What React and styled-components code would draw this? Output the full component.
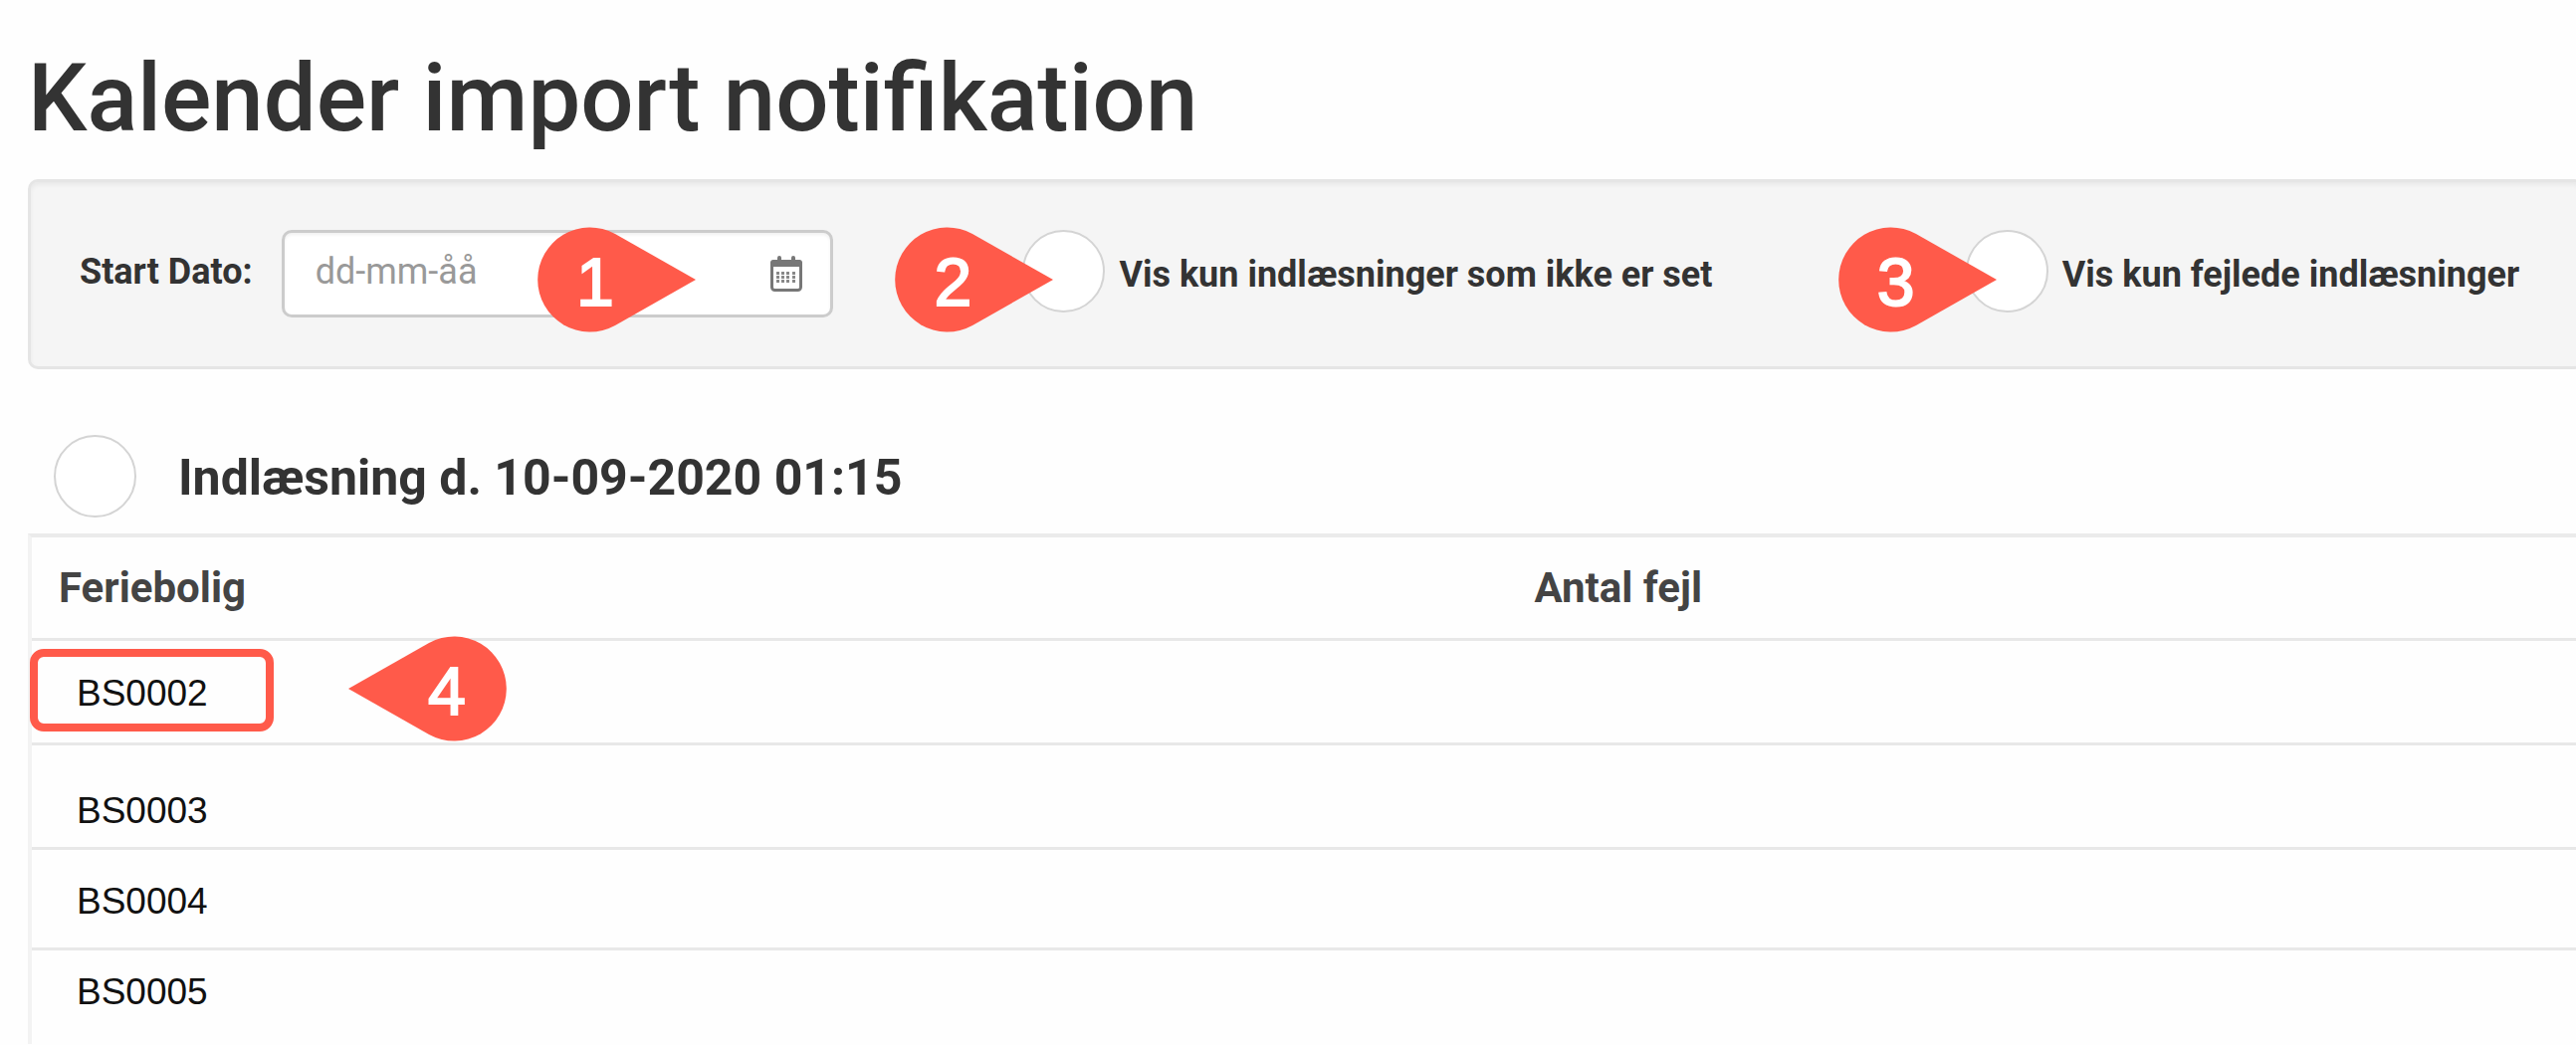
import React from "react";
import styled, { createGlobalStyle } from "styled-components";

const GlobalStyle = createGlobalStyle`
  *, *::before, *::after { box-sizing: border-box; }
  body {
    margin: 0;
    background: #fefefe;
    color: #333;
    font-family: Roboto, "Liberation Sans", sans-serif;
  }
`;

const Page = styled.main`
  padding: 41px 0 0 28px;
  overflow: hidden;
`;

const Title = styled.h1`
  margin: 0;
  font-size: 94px;
  font-weight: 500;
  line-height: 116px;
`;

const FilterPanel = styled.form`
  display: grid;
  grid-template-columns: 37.7% 37.7% 1fr;
  align-items: start;
  margin: 23px -8px 0 0;
  padding: 48px 0 49px 49px;
  border: 3px solid #e5e5e5;
  border-radius: 10px;
  background: #f5f5f5;
  box-shadow: inset 0 3px 4px rgba(0, 0, 0, 0.05);
`;

const Field = styled.div`
  position: relative;
  display: flex;
  align-items: center;
  gap: ${(p) => p.$gap}px;
`;

const FieldLabel = styled.label`
  padding-top: ${(p) => (p.$check ? 6 : 0)}px;
  padding-bottom: ${(p) => (p.$check ? 0 : 4)}px;
  font-size: 36px;
  font-weight: 700;
  line-height: 44px;
  white-space: nowrap;
`;

const DateBox = styled.div`
  display: flex;
  align-items: center;
  width: 554px;
  height: 88px;
  padding: 0 27px 0 31px;
  border: 3px solid #ccc;
  border-radius: 10px;
  background: #fff;
  box-shadow: inset 0 2px 3px rgba(0, 0, 0, 0.06);
`;

const DateInput = styled.input`
  flex: 1;
  min-width: 0;
  padding: 0 0 4px;
  border: 0;
  outline: 0;
  background: transparent;
  color: #333;
  font: 400 36px/44px Roboto, "Liberation Sans", sans-serif;
  &::placeholder { color: #999; opacity: 1; }
`;

const CalendarButton = styled.button`
  display: flex;
  padding: 0;
  border: 0;
  background: none;
  cursor: pointer;
`;

const RoundCheck = styled.input.attrs({ type: "checkbox" })`
  appearance: none;
  flex: none;
  width: 83px;
  height: 83px;
  margin: 0;
  border: 2px solid #d4d4d4;
  border-radius: 50%;
  background: #fff;
  &:checked { background: #999; }
`;

const MarkerWrap = styled.span`
  position: absolute;
  top: ${(p) => p.$top}px;
  left: ${(p) => p.$left}px;
  width: 160px;
  height: 106px;
  pointer-events: none;
`;

const MarkerShape = styled.svg`
  display: block;
  transform: ${(p) => (p.$flip ? "scaleX(-1)" : "none")};
`;

const MarkerNumber = styled.span`
  position: absolute;
  top: 0;
  left: ${(p) => (p.$flip ? 46 : 6)}px;
  width: 106px;
  color: #fff;
  font: 400 68px/110px "Liberation Sans", Arial, sans-serif;
  -webkit-text-stroke: 2px #fff;
  text-align: center;
`;

const ImportHeader = styled.div`
  display: flex;
  align-items: center;
  gap: 42px;
  padding: 66px 0 16px 26px;
`;

const ImportTitle = styled.label`
  padding-top: 2px;
  font-size: 50px;
  font-weight: 700;
  line-height: 60px;
`;

const ImportTable = styled.table`
  width: 100%;
  border-collapse: separate;
  border-spacing: 0;
  border-top: 4px solid #ebebeb;
  border-left: 4px solid #f3f3f3;
  table-layout: fixed;
`;

const HeadCell = styled.th`
  width: ${(p) => p.$width || "auto"};
  height: 104px;
  padding: 0 27px;
  border-bottom: 3px solid #e8e8e8;
  color: #444;
  font-size: 42px;
  font-weight: 700;
  line-height: 52px;
  text-align: left;
`;

const Cell = styled.td`
  position: relative;
  height: ${(p) => p.$height}px;
  padding: ${(p) => p.$top}px 28px 0 45px;
  border-bottom: ${(p) => (p.$last ? "0" : "3px solid #e8e8e8")};
  vertical-align: top;
`;

const HomeLink = styled.a`
  color: #111;
  font: 400 37px/42px "Liberation Sans", Arial, sans-serif;
  text-decoration: none;
`;

const Highlight = styled.span`
  position: absolute;
  top: 8px;
  left: -2px;
  width: 245px;
  height: 83px;
  border: 8px solid #ff5a4a;
  border-radius: 14px;
  pointer-events: none;
`;

function Marker({ number, top, left, flip }) {
  return (
    <MarkerWrap $top={top} $left={left}>
      <MarkerShape $flip={flip} width="160" height="106" viewBox="0 0 160 106" aria-hidden="true">
        <path d="M160 53 L79 7 A52.5 52.5 0 1 0 79 99 Z" fill="#ff5a4a" />
      </MarkerShape>
      <MarkerNumber $flip={flip}>{number}</MarkerNumber>
    </MarkerWrap>
  );
}

function CalendarIcon() {
  return (
    <svg width="34" height="38" viewBox="0 0 34 38" aria-hidden="true">
      <rect x="2.5" y="6.5" width="29" height="29" rx="3" fill="none" stroke="#777" strokeWidth="3" />
      <path d="M1 12V8a3 3 0 0 1 3-3h26a3 3 0 0 1 3 3v4z" fill="#777" />
      <path d="M10 3v5M24 3v5" stroke="#777" strokeWidth="4" strokeLinecap="round" />
      <g fill="#888">
        {[17, 21, 25].map((y) =>
          [7, 12, 17, 23].map((x) => <rect key={`${x}-${y}`} x={x} y={y} width="3" height="3" />)
        )}
      </g>
    </svg>
  );
}

const homes = [
  { id: "BS0002", height: 105, top: 32, marked: true },
  { id: "BS0003", height: 105, top: 45 },
  { id: "BS0004", height: 101, top: 31 },
  { id: "BS0005", height: 94, top: 21 },
];

export default function App() {
  return (
    <>
      <GlobalStyle />
      <Page>
        <Title>Kalender import notifikation</Title>
        <FilterPanel>
          <Field $gap={29}>
            <FieldLabel htmlFor="start">Start Dato:</FieldLabel>
            <DateBox>
              <DateInput id="start" type="text" placeholder="dd-mm-åå" />
              <CalendarButton type="button" aria-label="Kalender">
                <CalendarIcon />
              </CalendarButton>
            </DateBox>
            <Marker number="1" top={-3} left={459} />
          </Field>
          <Field $gap={14}>
            <RoundCheck id="unseen" />
            <FieldLabel $check htmlFor="unseen">Vis kun indlæsninger som ikke er set</FieldLabel>
            <Marker number="2" top={-3} left={-129} />
          </Field>
          <Field $gap={14}>
            <RoundCheck id="failed" />
            <FieldLabel $check htmlFor="failed">Vis kun fejlede indlæsninger</FieldLabel>
            <Marker number="3" top={-3} left={-129} />
          </Field>
        </FilterPanel>
        <ImportHeader>
          <RoundCheck id="import" />
          <ImportTitle htmlFor="import">Indlæsning d. 10-09-2020 01:15</ImportTitle>
        </ImportHeader>
        <ImportTable>
          <thead>
            <tr>
              <HeadCell $width="58%">Feriebolig</HeadCell>
              <HeadCell>Antal fejl</HeadCell>
            </tr>
          </thead>
          <tbody>
            {homes.map((home, i) => (
              <tr key={home.id}>
                <Cell $height={home.height} $top={home.top} $last={i === homes.length - 1}>
                  <HomeLink href={`#${home.id}`}>{home.id}</HomeLink>
                  {home.marked && <Highlight />}
                  {home.marked && <Marker number="4" top={-5} left={318} flip />}
                </Cell>
                <Cell $height={home.height} $top={home.top} $last={i === homes.length - 1} />
              </tr>
            ))}
          </tbody>
        </ImportTable>
      </Page>
    </>
  );
}
